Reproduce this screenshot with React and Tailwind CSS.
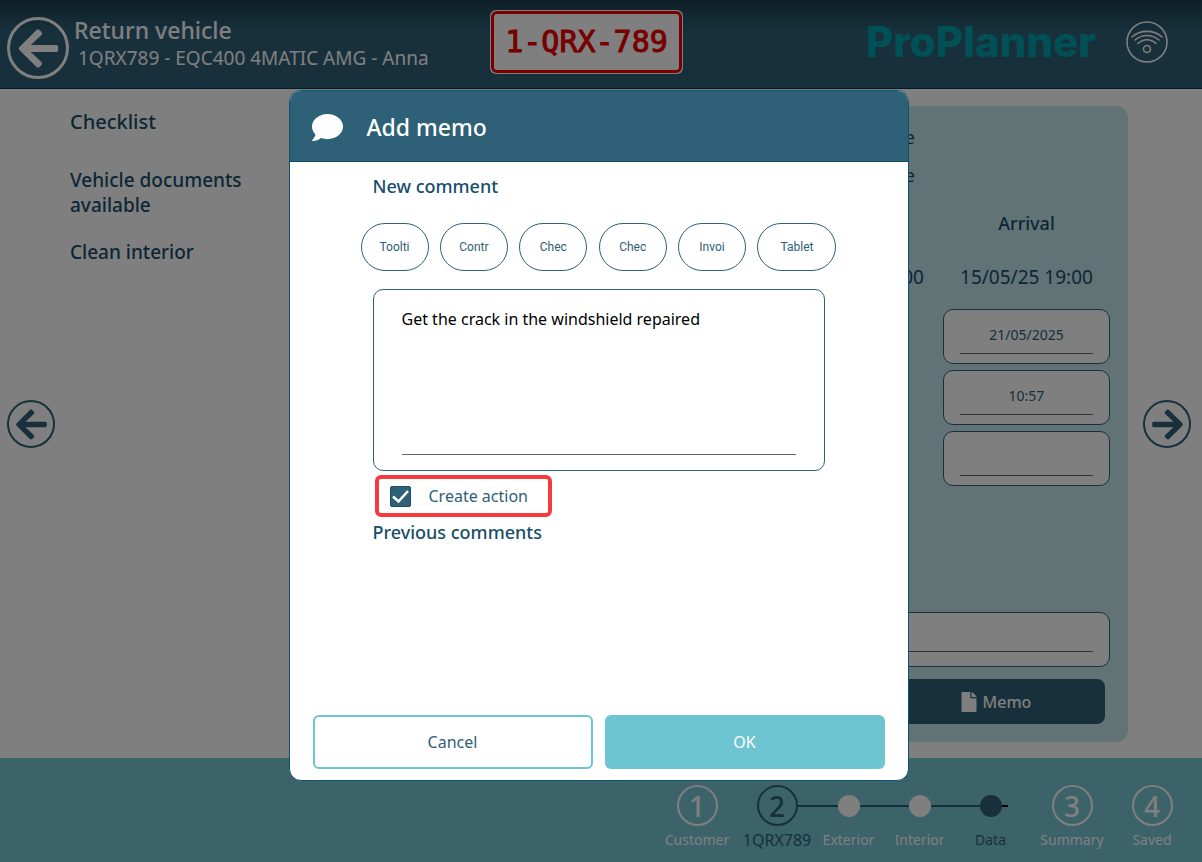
import React, { useState } from 'react'
import { FaArrowLeft, FaArrowRight, FaComment, FaFile } from 'react-icons/fa'

const quickTexts = ['Toolti', 'Contr', 'Chec', 'Chec', 'Invoi', 'Tablet']

const substeps = [
  { label: 'Exterior', active: false },
  { label: 'Interior', active: false },
  { label: 'Data', active: true },
]

const WifiBadge = () => (
  <svg className="w-[42px] h-[42px]" viewBox="0 0 42 42" fill="none" stroke="white" strokeWidth="1.6" strokeLinecap="round">
    <circle cx="21" cy="21" r="20" />
    <path d="M6 16C14.5 8.500 27.5 8.500 36 16" />
    <path d="M9 19C16 13 26 13 33 19" />
    <path d="M12 22.500C17.5 17.5 24.5 17.5 30 22.500" />
    <circle cx="21" cy="28" r="3.5" />
  </svg>
)

const Step = ({ number, label, active, connected }) => (
  <li className={active ? 'w-[72px] flex flex-col items-center text-[#2e6077]' : 'w-[72px] flex flex-col items-center text-white'}>
    <div className="w-full flex items-center">
      <div className="flex-1" />
      <span className="w-[41px] h-[41px] flex items-center justify-center rounded-full border-2 border-current text-[28px] leading-none font-medium">{number}</span>
      <div className={connected ? 'flex-1 h-0.5 bg-[#2e6077]' : 'flex-1'} />
    </div>
    <span className={active ? 'mt-1 text-base leading-5 whitespace-nowrap' : 'mt-1 text-sm leading-5 whitespace-nowrap'}>{label}</span>
  </li>
)

const Substep = ({ label, active }) => (
  <li className={active ? 'w-[71px] flex flex-col items-center text-[#2e6077]' : 'w-[71px] flex flex-col items-center text-white'}>
    <div className="w-full h-[41px] flex items-center">
      <div className="flex-1 h-0.5 bg-[#2e6077]" />
      <span className="w-[22px] h-[22px] rounded-full bg-current" />
      <div className="flex-1">
        <div className={active ? 'w-1.5 h-0.5 bg-black' : 'h-0.5 bg-[#2e6077]'} />
      </div>
    </div>
    <span className="mt-1 text-sm leading-5">{label}</span>
  </li>
)

const LinedInput = ({ label, value, onChange, padding = 'pb-[9px]' }) => (
  <div className={`h-[55px] px-4 bg-white border border-[#2e6077] rounded-[10px] ${padding}`}>
    <input
      aria-label={label}
      className="w-full h-full pt-1.5 border-b border-[#666] text-center text-sm text-[#2e6077] outline-none"
      value={value}
      onChange={onChange}
    />
  </div>
)

const MemoDialog = () => {
  const [comment, setComment] = useState('Get the crack in the windshield repaired')
  const [createAction, setCreateAction] = useState(true)

  return (
    <div className="absolute inset-0 flex justify-center bg-black/50 pt-[90px] pb-[81px] pr-[5px]">
      <div role="dialog" aria-labelledby="memo-title" className="w-full max-w-[620px] flex flex-col bg-white border border-[#0b5471] rounded-xl overflow-hidden">
        <div className="h-[71px] shrink-0 flex items-center gap-6 px-[22px] pt-0.5 bg-[#2e6077] border-b border-[#0b4c69] text-white">
          <FaComment size={31} />
          <h2 id="memo-title" className="text-[23px] font-medium">Add memo</h2>
        </div>
        <div className="flex-1 flex flex-col px-[71px] pt-2.5">
          <h3 className="px-3 text-lg leading-7 font-medium text-[#174e6a]">New comment</h3>
          <div className="mt-[23px] flex justify-between">
            {quickTexts.map((text, index) => (
              <button
                key={index}
                className="h-[48px] w-[68px] last:w-[79px] border border-[#2e6077] rounded-full font-[Roboto] text-xs text-[#2e6077]"
                onClick={() => setComment(text)}
              >{text}</button>
            ))}
          </div>
          <div className="mx-3 mt-[18px] h-[182px] px-7 pt-[15px] pb-[15px] border border-[#2e6077] rounded-[10px]">
            <textarea
              aria-label="New comment"
              className="block w-full h-full resize-none border-b border-[#666] text-base leading-7 text-black outline-none"
              value={comment}
              onChange={e => setComment(e.target.value)}
            />
          </div>
          <label className="ml-[14px] mt-1 h-[42px] self-start flex items-center gap-[18px] pl-[11px] pr-5 border-4 border-[#f53b3e] rounded-md text-base text-[#2e6077]">
            <span className="grid w-[21px] h-[21px]">
              <input
                type="checkbox"
                className="col-start-1 row-start-1 appearance-none w-[21px] h-[21px] rounded-xs border border-[#174e6a] checked:bg-[#2e6077]"
                checked={createAction}
                onChange={e => setCreateAction(e.target.checked)}
              />
              {createAction && (
                <svg className="col-start-1 row-start-1 pointer-events-none" viewBox="0 0 21 21" fill="none" stroke="white" strokeWidth="2.5">
                  <path d="M3 10.5L8.5 15.5L18 5" />
                </svg>
              )}
            </span>
            Create action
          </label>
          <h3 className="px-3 mt-px text-lg leading-7 font-medium text-[#174e6a]">Previous comments</h3>
        </div>
        <div className="grid grid-cols-2 gap-3 px-[23px] pb-[11px]">
          <button className="h-[54px] border-2 border-[#6cc5d0] rounded-md text-base text-[#2e6077]">Cancel</button>
          <button className="h-[54px] bg-[#6cc5d0] rounded-md text-base text-white">OK</button>
        </div>
      </div>
    </div>
  )
}

const App = () => {
  const [date, setDate] = useState('21/05/2025')
  const [time, setTime] = useState('10:57')
  const [mileage, setMileage] = useState('')
  const [note, setNote] = useState('')

  return (
    <div className="relative min-h-screen flex flex-col bg-white font-['Noto_Sans',sans-serif] text-[#2e6077]">
      <header className="relative h-[89px] flex items-center justify-between pt-0.5 pl-[7px] pr-[34px] bg-linear-to-b from-[#1e404e] to-[#2e6077] to-35% border-b border-[#04364d] text-white">
        <div className="flex items-center gap-[5px]">
          <button aria-label="Back" className="mt-1.5 w-[62px] h-[62px] flex items-center justify-center rounded-full border-3 border-white">
            <FaArrowLeft size={45} />
          </button>
          <div className="pb-0.5">
            <h1 className="text-[23px] leading-7 font-medium">Return vehicle</h1>
            <p className="pl-1 text-[19px] leading-7">1QRX789 - EQC400 4MATIC AMG - Anna</p>
          </div>
        </div>
        <div className="absolute left-[490px] top-[10px] p-px bg-white rounded-md">
          <div className="w-[191px] h-[62px] flex items-center justify-center border-3 border-[#f00000] rounded-md bg-white font-['DejaVu_Sans_Mono',monospace] text-[30px] leading-none text-[#f00000] [-webkit-text-stroke:1px_#f00000]">
            1-QRX-789
          </div>
        </div>
        <div className="flex items-center gap-[30px] pb-1.5">
          <span className="font-[Inter] font-extrabold text-[42px] leading-none text-[#00a0ac]">ProPlanner</span>
          <WifiBadge />
        </div>
      </header>

      <main className="flex-1 flex items-stretch gap-[15px] pl-[7px] pr-[11px] pt-[17px] pb-4">
        <button aria-label="Previous" className="self-center w-[48px] h-[48px] shrink-0 flex items-center justify-center rounded-full border-2 border-current">
          <FaArrowLeft size={35} />
        </button>
        <section className="w-[230px] font-medium text-[#174e6a]">
          <h2 className="text-xl leading-8">Checklist</h2>
          <ul className="mt-[30px] text-[19px] leading-[25px]">
            <li>Vehicle documents available</li>
            <li className="mt-[22px]">Clean interior</li>
          </ul>
        </section>
        <section className="ml-auto w-[520px] flex flex-col px-[18px] pt-3 pb-[18px] rounded-xl bg-[#c4e6ea] text-[#174e6a]">
          <div className="self-end w-[195px] text-lg leading-[38px]">
            <p className="-translate-x-full w-fit">e</p>
            <p className="-translate-x-full w-fit">e</p>
          </div>
          <div className="self-end mt-[15px] flex gap-[19px] text-[19px]">
            <p className="mt-[54px] leading-7">00</p>
            <div className="w-[167px] flex flex-col gap-1.5">
              <h3 className="text-center text-lg leading-7 font-medium">Arrival</h3>
              <p className="mt-5 mb-3 text-center leading-7">15/05/25 19:00</p>
              <LinedInput label="Arrival date" value={date} onChange={e => setDate(e.target.value)} />
              <LinedInput label="Arrival time" value={time} onChange={e => setTime(e.target.value)} />
              <LinedInput label="Arrival mileage" value={mileage} onChange={e => setMileage(e.target.value)} />
            </div>
          </div>
          <div className="mt-auto">
            <LinedInput label="Note" value={note} onChange={e => setNote(e.target.value)} padding="pb-3.5" />
          </div>
          <button className="self-end mt-3 mr-[5px] w-[220px] h-[45px] flex items-center justify-center gap-1 rounded-lg bg-[#2e6077] text-base font-medium text-white">
            <FaFile size={20} />
            Memo
          </button>
        </section>
        <button aria-label="Next" className="self-center w-[48px] h-[48px] shrink-0 flex items-center justify-center rounded-full border-2 border-current">
          <FaArrowRight size={35} />
        </button>
      </main>

      <footer className="pt-[27px] pb-3 pr-[14px] bg-[#78c6d2]">
        <ol className="flex justify-end gap-2">
          <Step number={1} label="Customer" />
          <li className="pr-0.5">
            <ol className="flex">
              <Step number={2} label="1QRX789" active connected />
              {substeps.map((step) => (
                <Substep key={step.label} label={step.label} active={step.active} />
              ))}
            </ol>
          </li>
          <Step number={3} label="Summary" />
          <Step number={4} label="Saved" />
        </ol>
      </footer>

      <MemoDialog />
    </div>
  )
}

export default App
